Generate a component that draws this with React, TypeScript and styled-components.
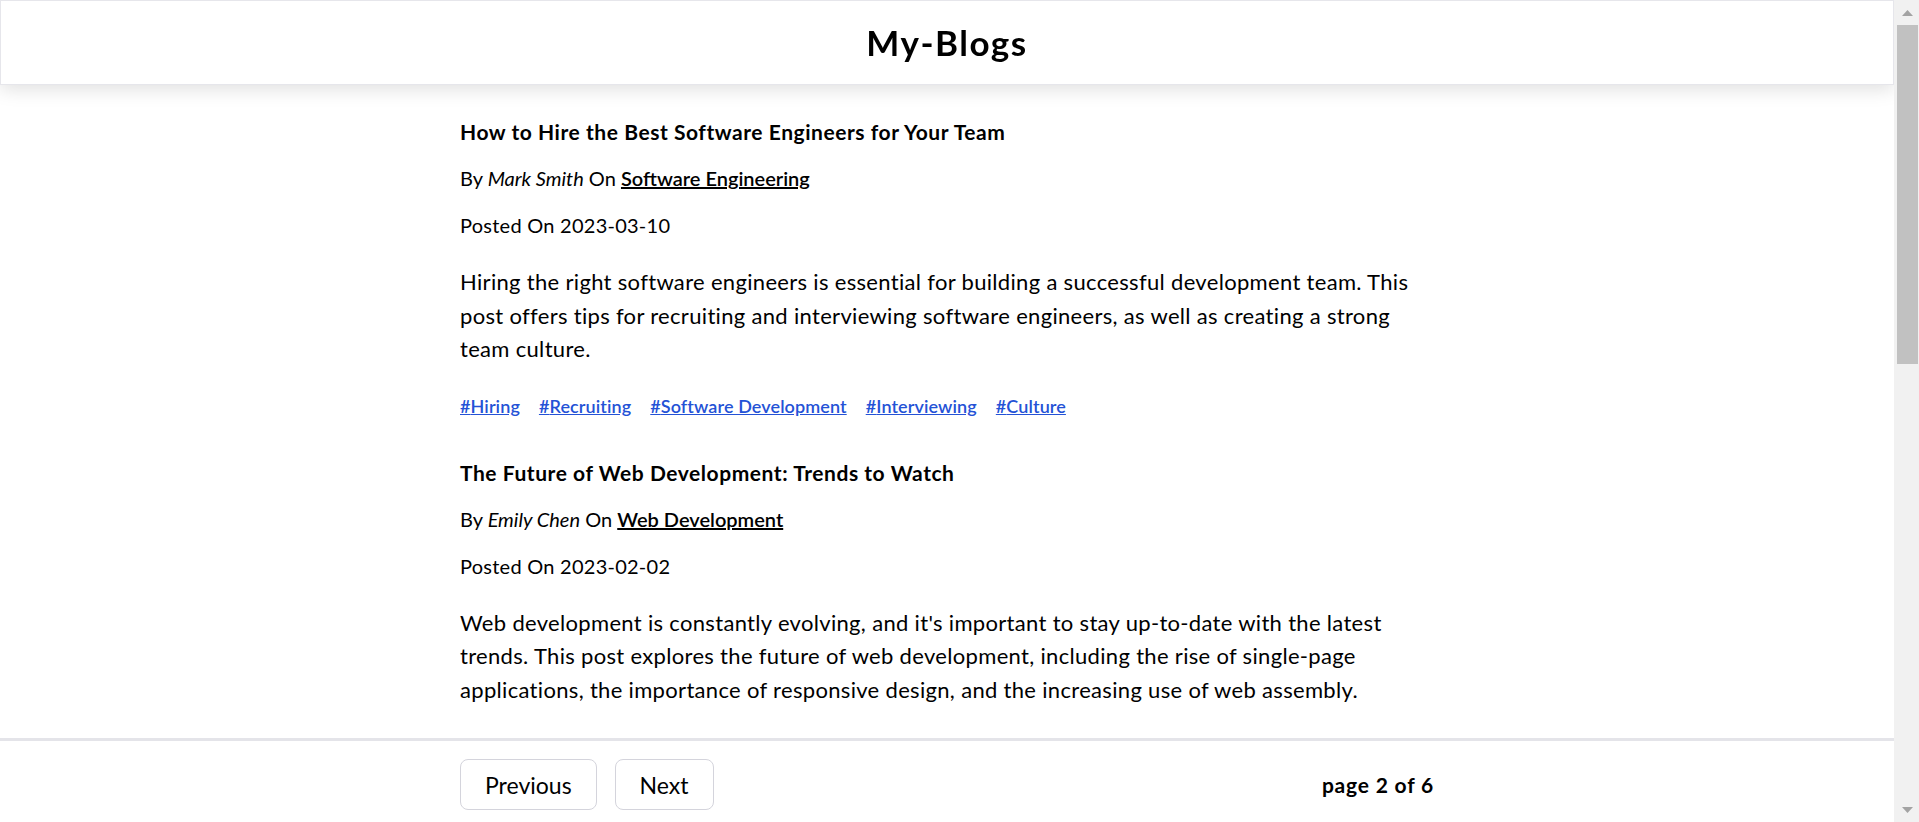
import styled, { createGlobalStyle } from "styled-components";

interface BlogPost {
  id: string;
  title: string;
  author: string;
  category: string;
  postedOn: string;
  summary: string;
  tags: string[];
}

const POSTS: BlogPost[] = [
  {
    id: "6",
    title: "How to Hire the Best Software Engineers for Your Team",
    author: "Mark Smith",
    category: "Software Engineering",
    postedOn: "2023-03-10",
    summary:
      "Hiring the right software engineers is essential for building a successful development team. This post offers tips for recruiting and interviewing software engineers, as well as creating a strong team culture.",
    tags: ["Hiring", "Recruiting", "Software Development", "Interviewing", "Culture"],
  },
  {
    id: "7",
    title: "The Future of Web Development: Trends to Watch",
    author: "Emily Chen",
    category: "Web Development",
    postedOn: "2023-02-02",
    summary:
      "Web development is constantly evolving, and it's important to stay up-to-date with the latest trends. This post explores the future of web development, including the rise of single-page applications, the importance of responsive design, and the increasing use of web assembly.",
    tags: ["Web Development", "Trends", "SPA", "Responsive Design", "WebAssembly"],
  },
  {
    id: "8",
    title: "Getting Started with Machine Learning in Python",
    author: "David Lee",
    category: "Data Science",
    postedOn: "2023-01-18",
    summary:
      "Machine learning is one of the most exciting fields in computer science. This post walks through the basics of building your first model in Python, from preparing data to evaluating results.",
    tags: ["Python", "Machine Learning", "Data", "Beginners"],
  },
  {
    id: "9",
    title: "Writing Clean Code: Habits That Scale",
    author: "Sarah Johnson",
    category: "Best Practices",
    postedOn: "2022-12-05",
    summary:
      "Clean code is easier to read, test and change. This post covers naming, small functions, meaningful tests and the everyday habits that keep a growing codebase healthy.",
    tags: ["Clean Code", "Refactoring", "Testing"],
  },
];

const GlobalStyle = createGlobalStyle`
  html, body {
    margin: 0;
    padding: 0;
    background: #ffffff;
    color: #000000;
    font-family: "Segoe UI", Lato, "Open Sans", sans-serif;
    overflow: hidden;
  }

  * {
    box-sizing: border-box;
  }
`;

const Shell = styled.div`
  height: 100vh;
  display: flex;
`;

/* the page scrolls inside this box; the native bar is hidden and drawn beside it */
const Viewport = styled.div`
  flex: 1;
  min-width: 0;
  overflow-y: auto;
  scrollbar-width: none;
  display: flex;
  flex-direction: column;

  &::-webkit-scrollbar {
    display: none;
  }
`;

const ScrollTrack = styled.div`
  flex: 0 0 25px;
  display: flex;
  flex-direction: column;
  background: #f1f1f1;
`;

const ScrollArrow = styled.div`
  flex: 0 0 25px;
  display: flex;
  align-items: center;
  justify-content: center;
  padding-left: 2px;
`;

const ScrollThumb = styled.div`
  height: 339px;
  margin: 0 1px 0 3px;
  background: #c1c1c1;
`;

const ScrollSpacer = styled.div`
  flex: 1;
`;

const Header = styled.header`
  position: sticky;
  top: 0;
  z-index: 2;
  flex: 0 0 85px;
  display: flex;
  align-items: center;
  justify-content: center;
  background: #ffffff;
  border: 1px solid #e6e6eb;
  box-shadow: 0 4px 18px rgba(0, 0, 0, 0.13);
`;

const SiteTitle = styled.h1`
  margin: 0;
  font-size: 35px;
  font-weight: 700;
  letter-spacing: 1.5px;
  line-height: 1;
`;

const Main = styled.main`
  display: flex;
  justify-content: center;
  padding: 33px 0 20px;
`;

const Container = styled.div`
  width: 974px;
  display: flex;
  flex-direction: column;
`;

const Article = styled.article`
  display: flex;
  flex-direction: column;
  margin-bottom: 41px;
`;

const PostTitle = styled.h2`
  margin: 0 0 18px;
  font-size: 21px;
  font-weight: 700;
  letter-spacing: 0.55px;
  line-height: 28px;
`;

const Meta = styled.p<{ $gap: number }>`
  margin: 0 0 ${({ $gap }) => $gap}px;
  font-size: 20px;
  line-height: 28px;
`;

const PostedOn = styled(Meta)`
  letter-spacing: 0.25px;
`;

const Author = styled.em`
  font-style: italic;
`;

const Category = styled.a`
  color: #000000;
  font-weight: 600;
  text-decoration: underline;
`;

const Summary = styled.p`
  margin: 0 0 28px;
  font-size: 22px;
  letter-spacing: 0.32px;
  line-height: 33.6px;
`;

const Tags = styled.div`
  display: flex;
  flex-flow: row wrap;
  gap: 19px;
`;

const Tag = styled.a`
  font-size: 18px;
  line-height: 24px;
  font-weight: 600;
  letter-spacing: 0.1px;
  color: #2452d6;
  text-decoration: underline;
`;

const Footer = styled.footer`
  position: sticky;
  bottom: 0;
  z-index: 2;
  display: flex;
  justify-content: center;
  background: #ffffff;
  border-top: 3px solid #e4e4e9;
  padding: 18px 0 12px;
`;

const FooterInner = styled.div`
  width: 974px;
  display: flex;
  align-items: center;
  justify-content: space-between;
`;

const ButtonGroup = styled.div`
  display: flex;
  gap: 18px;
`;

const PageButton = styled.button`
  height: 51px;
  padding: 0 24px;
  background: #ffffff;
  border: 1px solid #d4d4dc;
  border-radius: 8px;
  font-family: inherit;
  font-size: 23px;
  color: #000000;
  cursor: pointer;
`;

const PageInfo = styled.span`
  font-size: 21px;
  font-weight: 700;
  letter-spacing: 0.8px;
`;

const ArrowIcon = ({ down }: { down?: boolean }) => (
  <svg width="11" height="6" viewBox="0 0 11 6">
    <polygon points={down ? "0,0 11,0 5.5,6" : "0,6 11,6 5.5,0"} fill="#a3a3a3" />
  </svg>
);

const PostItem = ({ title, author, category, postedOn, summary, tags }: BlogPost) => (
  <Article>
    <PostTitle>{title}</PostTitle>
    <Meta $gap={19}>
      By <Author>{author}</Author> On <Category href="#">{category}</Category>
    </Meta>
    <PostedOn $gap={26}>Posted On {postedOn}</PostedOn>
    <Summary>{summary}</Summary>
    <Tags>
      {tags.map((tag) => (
        <Tag key={tag} href="#">
          #{tag}
        </Tag>
      ))}
    </Tags>
  </Article>
);

const App = () => {
  return (
    <>
      <GlobalStyle />
      <Shell>
        <Viewport>
          <Header>
            <SiteTitle>My-Blogs</SiteTitle>
          </Header>
          <Main>
            <Container>
              {POSTS.map((post) => (
                <PostItem key={`post-${post.id}`} {...post} />
              ))}
            </Container>
          </Main>
          <Footer>
            <FooterInner>
              <ButtonGroup>
                <PageButton>Previous</PageButton>
                <PageButton>Next</PageButton>
              </ButtonGroup>
              <PageInfo>page 2 of 6</PageInfo>
            </FooterInner>
          </Footer>
        </Viewport>
        <ScrollTrack>
          <ScrollArrow>
            <ArrowIcon />
          </ScrollArrow>
          <ScrollThumb />
          <ScrollSpacer />
          <ScrollArrow>
            <ArrowIcon down />
          </ScrollArrow>
        </ScrollTrack>
      </Shell>
    </>
  );
};

export default App;
